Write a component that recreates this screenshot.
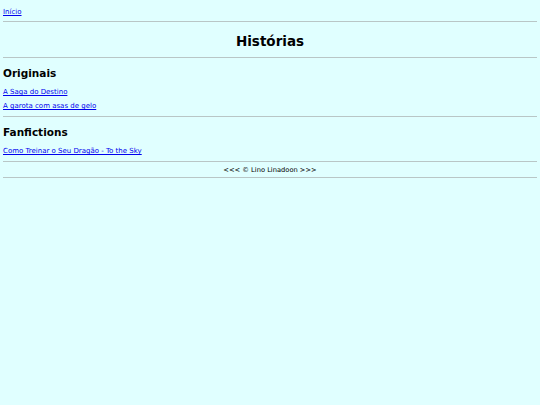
export default function App() {
  const linkClass = "text-[#0000ee] underline";
  const hr = "mx-[3px] h-px bg-[#b9c6c6]";

  return (
    <div className="min-h-[405px] w-full bg-[#e0ffff] font-['DejaVu_Sans',sans-serif] text-black">
      <nav className="mx-[3px] pt-[8px] text-[7px] leading-[8px]">
        <a href="#" className={linkClass}>
          Início
        </a>
      </nav>
      <div className={`${hr} mt-[5px]`} />

      <h1 className="mt-[11px] text-center text-[13.5px] font-bold leading-[16px]">Histórias</h1>
      <div className={`${hr} mt-[8px]`} />

      <section className="mx-[3px]">
        <h2 className="mt-[9px] text-[10.5px] font-bold leading-[12px]">Originais</h2>
        <p className="mt-[9px] text-[7px] leading-[8px]">
          <a href="#" className={linkClass}>
            A Saga do Destino
          </a>
        </p>
        <p className="mt-[6px] text-[7px] leading-[8px]">
          <a href="#" className={linkClass}>
            A garota com asas de gelo
          </a>
        </p>
      </section>
      <div className={`${hr} mt-[6px]`} />

      <section className="mx-[3px]">
        <h2 className="mt-[9px] text-[10.5px] font-bold leading-[12px]">Fanfictions</h2>
        <p className="mt-[9px] text-[7px] leading-[8px]">
          <a href="#" className={linkClass}>
            Como Treinar o Seu Dragão - To the Sky
          </a>
        </p>
      </section>
      <div className={`${hr} mt-[6px]`} />

      <footer className="mt-[4px] text-center text-[6.7px] leading-[8px]">&lt;&lt;&lt; © Lino Linadoon &gt;&gt;&gt;</footer>
      <div className={`${hr} mt-[3px]`} />
    </div>
  );
}
